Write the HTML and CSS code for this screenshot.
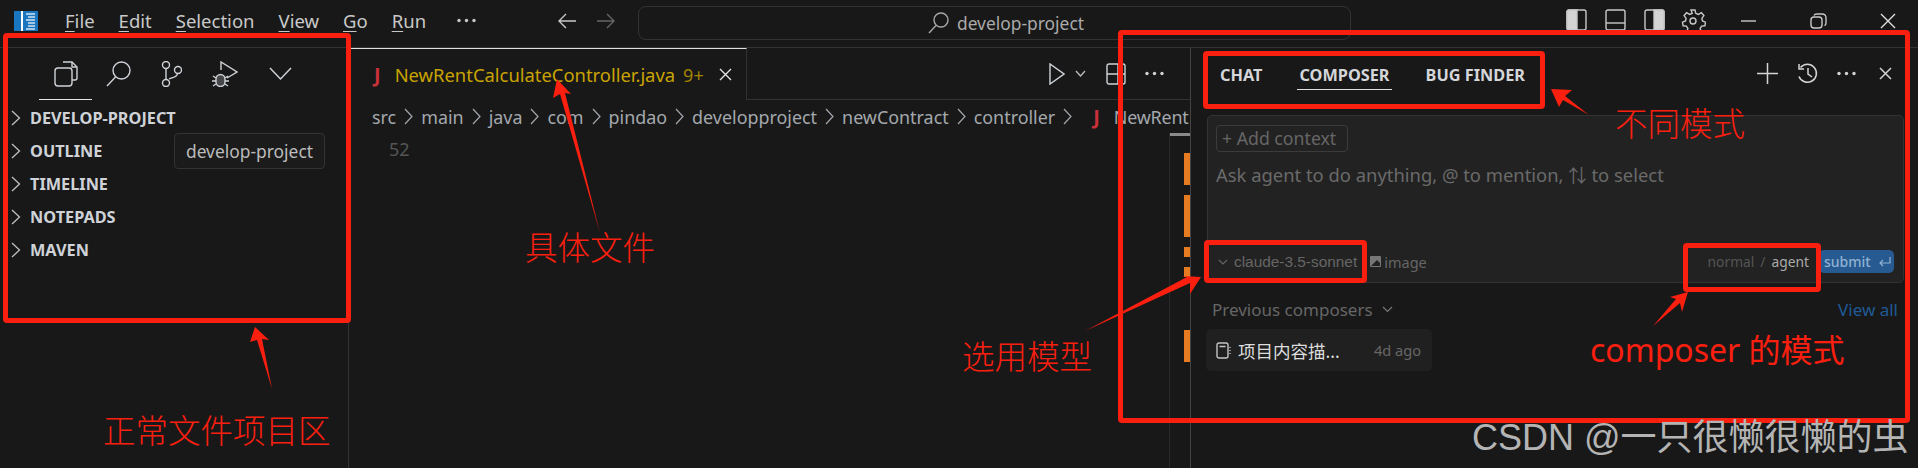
FILE: index.html
```html
<!DOCTYPE html>
<html lang="zh-CN">
<head>
  <meta charset="UTF-8">
  <title>Cursor composer</title>
  <link rel="stylesheet" href="styles.css">
</head>
<body>
  <div class="window">
    <header class="titlebar">
      <svg class="logo" width="24" height="20" viewBox="0 0 24 20">
        <rect width="24" height="20" fill="#1a77bf"/>
        <rect x="7" width="2" height="20" fill="#fff"/>
        <path d="M12 3h9M14 6h7M12 9h9M14 12h7M14 15h7M12 18h9" stroke="#cfe3f3" stroke-width="1.4"/>
      </svg>
      <nav class="menu">
        <span><u>F</u>ile</span>
        <span><u>E</u>dit</span>
        <span><u>S</u>election</span>
        <span><u>V</u>iew</span>
        <span><u>G</u>o</span>
        <span><u>R</u>un</span>
        <svg class="menu-more" width="19" height="5" viewBox="0 0 19 5" fill="#c8c8c8"><circle cx="2" cy="2.500" r="1.700"/><circle cx="9.500" cy="2.500" r="1.700"/><circle cx="17" cy="2.500" r="1.700"/></svg>
      </nav>
      <div class="nav-arrows">
        <svg width="20" height="18" viewBox="0 0 20 18" fill="none" stroke="#c8c8c8" stroke-width="1.4"><path d="M19 9H2M9 2 2 9l7 7"/></svg>
        <svg width="20" height="18" viewBox="0 0 20 18" fill="none" stroke="#666" stroke-width="1.4"><path d="M1 9h17M11 2l7 7-7 7"/></svg>
      </div>
      <div class="search">
        <svg width="21" height="22" viewBox="0 0 21 22" fill="none" stroke="#a8a8a8" stroke-width="1.4"><circle cx="13" cy="8" r="7"/><path d="M8 13.500 1 21"/></svg>
        <span>develop-project</span>
      </div>
      <div class="layout-icons">
        <svg width="21" height="22" viewBox="0 0 21 22" fill="none" stroke="#c8c8c8" stroke-width="1.4"><rect x="1" y="1" width="19" height="20" rx="2"/><path d="M1 3a2 2 0 0 1 2-2h8v20H3a2 2 0 0 1-2-2z" fill="#d4d4d4"/></svg>
        <svg width="21" height="22" viewBox="0 0 21 22" fill="none" stroke="#c8c8c8" stroke-width="1.4"><rect x="1" y="1" width="19" height="20" rx="2"/><path d="M1 14h19"/></svg>
        <svg width="21" height="22" viewBox="0 0 21 22" fill="none" stroke="#c8c8c8" stroke-width="1.4"><rect x="1" y="1" width="19" height="20" rx="2"/><path d="M10 1h8a2 2 0 0 1 2 2v16a2 2 0 0 1-2 2h-8z" fill="#d4d4d4"/></svg>
        <svg class="gear" width="26" height="24" viewBox="0 0 26 24" fill="none" stroke="#c8c8c8" stroke-width="1.4"><circle cx="13" cy="12" r="3"/><path d="M11 1h4l.8 3.300 2.600 1.100 3-1.700 2.500 2.900-2 2.700.6 2.700 3 1.200-.6 3.600-3.200.3-1.600 2.300 1 3.100-3.400 1.600-2-2.500h-3.400l-2 2.500-3.400-1.600 1-3.100-1.600-2.300-3.200-.3-.6-3.600 3-1.200.6-2.700-2-2.700 2.500-2.900 3 1.700 2.600-1.100z"/></svg>
      </div>
      <div class="win-controls">
        <svg width="16" height="16" viewBox="0 0 16 16" stroke="#c8c8c8" stroke-width="1.400"><path d="M0 8h15"/></svg>
        <svg width="17" height="16" viewBox="0 0 17 16" fill="none" stroke="#c8c8c8" stroke-width="1.400"><rect x="1" y="4" width="11" height="11" rx="3"/><path d="M4 2.500Q4.500 1 7 1h5q4 0 4 4v5q0 2-1.500 2.500"/></svg>
        <svg width="16" height="16" viewBox="0 0 16 16" stroke="#e0e0e0" stroke-width="1.400"><path d="m1 1 14 14M15 1 1 15"/></svg>
      </div>
    </header>

    <div class="workbench">
      <aside class="sidebar">
        <div class="activity">
          <span class="activity-item is-active">
            <svg width="24" height="26" viewBox="0 0 24 26" fill="none" stroke="#cfd3d8" stroke-width="1.400"><path d="M9 1h9l5 5v11a2 2 0 0 1-2 2h-3"/><path d="M18 1v5h5"/><rect x="1" y="7" width="17" height="18" rx="3"/></svg>
          </span>
          <span class="activity-item">
            <svg width="25" height="26" viewBox="0 0 25 26" fill="none" stroke="#cfd3d8" stroke-width="1.400"><circle cx="15.500" cy="9.500" r="8.500"/><path d="M9.500 16 1 25"/></svg>
          </span>
          <span class="activity-item">
            <svg width="21" height="26" viewBox="0 0 21 26" fill="none" stroke="#cfd3d8" stroke-width="1.400"><circle cx="5" cy="4" r="3.500"/><circle cx="5" cy="22" r="3.500"/><circle cx="17" cy="9" r="3.500"/><path d="M5 7.500v11M8 18c3-2 8-1 8.500-5.500"/></svg>
          </span>
          <span class="activity-item">
            <svg width="26" height="26" viewBox="0 0 26 26" fill="none" stroke="#cfd3d8" stroke-width="1.400"><path d="M9 9V1l16 10-10 6"/><path d="M4 18a4.500 4.500 0 0 1 9 0v3a4.500 4.500 0 0 1-9 0z" fill="#cfd3d8" fill-opacity=".25"/><path d="M1 15l3 2M16 15l-3 2M0 20h4M13 20h4M1 25l3-2M16 25l-3-2"/></svg>
          </span>
          <span class="activity-item">
            <svg width="23" height="14" viewBox="0 0 23 14" fill="none" stroke="#cfd3d8" stroke-width="1.500"><path d="m1 1 10.500 11L22 1"/></svg>
          </span>
        </div>
        <ul class="views">
          <li><svg width="10" height="16" viewBox="0 0 10 16" fill="none" stroke="#c0c0c0" stroke-width="1.300"><path d="m1 1 7.500 7L1 15"/></svg>DEVELOP-PROJECT</li>
          <li><svg width="10" height="16" viewBox="0 0 10 16" fill="none" stroke="#c0c0c0" stroke-width="1.300"><path d="m1 1 7.500 7L1 15"/></svg>OUTLINE</li>
          <li><svg width="10" height="16" viewBox="0 0 10 16" fill="none" stroke="#c0c0c0" stroke-width="1.300"><path d="m1 1 7.500 7L1 15"/></svg>TIMELINE</li>
          <li><svg width="10" height="16" viewBox="0 0 10 16" fill="none" stroke="#c0c0c0" stroke-width="1.300"><path d="m1 1 7.500 7L1 15"/></svg>NOTEPADS</li>
          <li><svg width="10" height="16" viewBox="0 0 10 16" fill="none" stroke="#c0c0c0" stroke-width="1.300"><path d="m1 1 7.500 7L1 15"/></svg>MAVEN</li>
        </ul>
        <div class="tooltip">develop-project</div>
      </aside>

      <main class="editor">
        <div class="tabbar">
          <div class="tab">
            <span class="java-j">J</span>
            <span class="tab-name">NewRentCalculateController.java</span>
            <span class="tab-count">9+</span>
            <svg width="13" height="13" viewBox="0 0 13 13" stroke="#e4e4e4" stroke-width="1.400"><path d="m1 1 11 11M12 1 1 12"/></svg>
          </div>
          <div class="tab-actions">
            <svg width="16" height="22" viewBox="0 0 16 22" fill="none" stroke="#cfd3d8" stroke-width="1.400"><path d="M1 1v20l14-10z"/></svg>
            <svg class="tab-caret" width="11" height="7" viewBox="0 0 11 7" fill="none" stroke="#c0c0c0" stroke-width="1.200"><path d="m1 1 4.500 5L10 1"/></svg>
            <svg class="tab-split" width="20" height="22" viewBox="0 0 20 22" fill="none" stroke="#cfd3d8" stroke-width="1.400"><rect x="1" y="1" width="18" height="20" rx="2"/><path d="M1 11h18M12 1v20"/></svg>
            <svg class="tab-dots" width="19" height="5" viewBox="0 0 19 5" fill="#d4d4d4"><circle cx="2" cy="2.500" r="1.700"/><circle cx="9.500" cy="2.500" r="1.700"/><circle cx="17" cy="2.500" r="1.700"/></svg>
          </div>
        </div>
        <div class="crumbs">
          <span>src</span>
          <svg width="9" height="17" viewBox="0 0 9 17" fill="none" stroke="#a4a8ad" stroke-width="1.200"><path d="m1 1 7 7.500L1 16"/></svg>
          <span>main</span>
          <svg width="9" height="17" viewBox="0 0 9 17" fill="none" stroke="#a4a8ad" stroke-width="1.200"><path d="m1 1 7 7.500L1 16"/></svg>
          <span>java</span>
          <svg width="9" height="17" viewBox="0 0 9 17" fill="none" stroke="#a4a8ad" stroke-width="1.200"><path d="m1 1 7 7.500L1 16"/></svg>
          <span>com</span>
          <svg width="9" height="17" viewBox="0 0 9 17" fill="none" stroke="#a4a8ad" stroke-width="1.200"><path d="m1 1 7 7.500L1 16"/></svg>
          <span>pindao</span>
          <svg width="9" height="17" viewBox="0 0 9 17" fill="none" stroke="#a4a8ad" stroke-width="1.200"><path d="m1 1 7 7.500L1 16"/></svg>
          <span>developproject</span>
          <svg width="9" height="17" viewBox="0 0 9 17" fill="none" stroke="#a4a8ad" stroke-width="1.200"><path d="m1 1 7 7.500L1 16"/></svg>
          <span>newContract</span>
          <svg width="9" height="17" viewBox="0 0 9 17" fill="none" stroke="#a4a8ad" stroke-width="1.200"><path d="m1 1 7 7.500L1 16"/></svg>
          <span>controller</span>
          <svg width="9" height="17" viewBox="0 0 9 17" fill="none" stroke="#a4a8ad" stroke-width="1.200"><path d="m1 1 7 7.500L1 16"/></svg>
          <span class="java-j crumb-j">J</span>
          <span class="crumb-last">NewRent</span>
        </div>
        <div class="code">
          <div class="line-no">52</div>
          <div class="ruler">
            <div class="slider"></div>
            <div class="mark mark-a"></div>
            <div class="mark mark-b"></div>
            <div class="mark mark-c"></div>
            <div class="mark mark-d"></div>
            <div class="mark mark-e"></div>
          </div>
        </div>
      </main>

      <section class="panel">
        <div class="panel-head">
          <div class="modes">
            <span class="mode mode-chat">CHAT</span>
            <span class="mode mode-composer">COMPOSER</span>
            <span class="mode mode-bug">BUG FINDER</span>
          </div>
          <div class="panel-actions">
            <svg width="21" height="21" viewBox="0 0 21 21" stroke="#d4d4d4" stroke-width="1.500"><path d="M10.500 0v21M0 10.500h21"/></svg>
            <svg width="21" height="21" viewBox="0 0 21 21" fill="none" stroke="#d4d4d4" stroke-width="1.500"><path d="M3.500 4.500a9 9 0 1 1-1.500 9M2 1v5h5M11 5v6l4 3"/></svg>
            <svg width="19" height="5" viewBox="0 0 19 5" fill="#d4d4d4"><circle cx="2" cy="2.500" r="1.700"/><circle cx="9.500" cy="2.500" r="1.700"/><circle cx="17" cy="2.500" r="1.700"/></svg>
            <svg class="panel-close" width="13" height="13" viewBox="0 0 13 13" stroke="#d4d4d4" stroke-width="1.500"><path d="m1 1 11 11M12 1 1 12"/></svg>
          </div>
        </div>

        <div class="composer">
          <div class="add-context">+ Add context</div>
          <div class="prompt">Ask agent to do anything, @ to mention, ⇅ to select</div>
          <div class="composer-foot">
            <svg width="10" height="6" viewBox="0 0 10 6" fill="none" stroke="#666" stroke-width="1.100"><path d="m1 1 4 4 4-4"/></svg>
            <span class="model">claude-3.5-sonnet</span>
            <svg class="image-icon" width="11" height="11" viewBox="0 0 11 11"><rect width="11" height="11" rx="1" fill="#777"/><path d="M1 10 7 4l3 3v3z" fill="#222"/></svg>
            <span class="image-label">image</span>
            <span class="switch"><span class="off">normal</span><span class="slash">/</span><span class="on">agent</span></span>
            <span class="submit">submit
              <svg width="14" height="12" viewBox="0 0 14 12" fill="none" stroke="#8fb2d2" stroke-width="1.200"><path d="M12 1v6H2M5 4 2 7l3 3"/></svg>
            </span>
          </div>
        </div>

        <div class="previous">
          <span>Previous composers</span>
          <svg width="11" height="7" viewBox="0 0 11 7" fill="none" stroke="#777" stroke-width="1.200"><path d="m1 1 4.500 4.500L10 1"/></svg>
          <a class="view-all">View all</a>
        </div>
        <div class="history-row">
          <svg width="15" height="17" viewBox="0 0 15 17" fill="none" stroke="#c4c4c4" stroke-width="1.400"><rect x="1" y="1" width="11" height="15" rx="2"/><path d="M3.500 4.500h6M14 5v1M14 8v1M14 11v1"/></svg>
          <span class="history-title">项目内容描...</span>
          <span class="history-age">4d ago</span>
        </div>
      </section>
    </div>
  </div>

  <!-- red notes drawn over the screenshot -->
  <div class="note-box box-side"></div>
  <div class="note-box box-panel"></div>
  <div class="note-box box-modes"></div>
  <div class="note-box box-model"></div>
  <div class="note-box box-switch"></div>
  <svg class="arrows" width="1918" height="468" viewBox="0 0 1918 468" fill="#fb1f10">
    <path d="M557 79 571 94 565 93 600 233 560 94 553 98z"/>
    <path d="M255 327 269 340 262 339 272 389 257 340 250 342z"/>
    <path d="M1201 277 1190 294 1190 283 1085 331 1187 277 1182 276z"/>
    <path d="M1551 89 1572 90 1565 96 1589 115 1563 100 1559 107z"/>
    <path d="M1688 292 1682 312 1680 303 1653 326 1676 299 1670 297z"/>
  </svg>
  <div class="note note-side">正常文件项目区</div>
  <div class="note note-file">具体文件</div>
  <div class="note note-model">选用模型</div>
  <div class="note note-modes">不同模式</div>
  <div class="note note-switch">composer 的模式</div>
  <div class="watermark">CSDN @一只很懒很懒的虫</div>
</body>
</html>
```

FILE: styles.css
```css
* {
  box-sizing: border-box;
}

body {
  margin: 0;
  background: #181818;
  color: #ccc;
  font-family: "Noto Sans", "Noto Sans CJK SC", sans-serif;
  font-size: 17px;
  overflow: hidden;
}

svg {
  display: block;
  flex: none;
}

.window {
  height: 468px;
  display: flex;
  flex-direction: column;
}

/* title bar */
.titlebar {
  height: 48px;
  flex: none;
  display: flex;
  align-items: center;
  border-bottom: 1px solid #333;
  padding-left: 14px;
  padding-bottom: 6px;
}

.menu {
  display: flex;
  align-items: center;
  gap: 24px;
  width: 459px;
  margin-left: 27px;
  color: #c8c8c8;
  font-size: 18.500px;
}

.menu u {
  text-underline-offset: 3px;
}

.menu-more {
  margin-left: 7px;
}

.nav-arrows {
  display: flex;
  gap: 19px;
  margin-left: 33px;
}

.search {
  width: 713px;
  height: 34px;
  margin-left: 22px;
  margin-top: 4px;
  padding-left: 23px;
  display: flex;
  align-items: center;
  justify-content: center;
  gap: 8px;
  border: 1px solid #333;
  border-radius: 8px;
  color: #aaa;
  font-size: 17.400px;
}

.layout-icons {
  display: flex;
  gap: 18px;
  margin-left: 215px;
}

.gear {
  margin-left: -3px;
}

.win-controls {
  display: flex;
  align-items: center;
  gap: 53px;
  margin-left: 35px;
}

/* columns */
.workbench {
  flex: 1;
  display: flex;
  min-height: 0;
}

.sidebar {
  width: 349px;
  flex: none;
  border-right: 1px solid #333;
  position: relative;
}

.activity {
  height: 52px;
  display: flex;
  padding-left: 39px;
  align-items: center;
}

.activity-item {
  width: 53px;
  height: 52px;
  display: flex;
  align-items: center;
  justify-content: center;
}

.activity-item:last-child {
  margin-left: 3px;
}

.activity-item.is-active {
  border-bottom: 1px solid #e6e6e6;
}

.views {
  list-style: none;
  margin: 0;
  padding: 1px 0 0;
}

.views li {
  height: 33px;
  display: flex;
  align-items: center;
  gap: 9px;
  padding-left: 11px;
  font-size: 16.300px;
  font-weight: 700;
  color: #cfd3d8;
}

.tooltip {
  position: absolute;
  left: 174px;
  top: 85px;
  width: 151px;
  height: 36px;
  line-height: 34px;
  text-align: center;
  background: #1b1b1b;
  border: 1px solid #333;
  border-radius: 4px;
  color: #bbb;
  font-size: 17.400px;
}

/* editor */
.editor {
  width: 841px;
  flex: none;
  display: flex;
  flex-direction: column;
}

.tabbar {
  height: 52px;
  flex: none;
  display: flex;
  border-bottom: 1px solid #333;
}

.tab {
  width: 398px;
  height: 52px;
  display: flex;
  align-items: center;
  padding-left: 25px;
  border-top: 1px solid #e0e0e0;
  border-right: 1px solid #333;
  background: #181818;
}

.java-j {
  color: #c8303a;
  font-weight: 700;
  font-size: 20px;
}

.tab-name {
  margin-left: 14px;
  color: #c9a400;
  font-size: 18.400px;
  white-space: nowrap;
}

.tab-count {
  margin-left: 8px;
  margin-right: 15px;
  color: #a38400;
  font-size: 18px;
}

.tab-actions {
  display: flex;
  align-items: center;
  margin-left: 302px;
}

.tab-caret {
  margin-left: 10px;
}

.tab-split {
  margin-left: 20px;
}

.tab-dots {
  margin-left: 19px;
}

.crumbs {
  height: 33px;
  flex: none;
  display: flex;
  align-items: center;
  gap: 8px;
  padding-left: 23px;
  color: #a4a8ad;
  font-size: 17.900px;
  white-space: nowrap;
}

.crumb-j {
  margin: 0 6px 0 13px;
  font-size: 20px;
}

.crumb-last {
  letter-spacing: -0.2px;
}

.code {
  flex: 1;
  display: flex;
}

.line-no {
  margin-left: 40px;
  color: #555;
  font-size: 18px;
  line-height: 32px;
}

.ruler {
  width: 21px;
  margin-left: auto;
  border-left: 1px solid #2a2a2a;
}

.slider {
  height: 3px;
  background: #8a8a8a;
}

.mark {
  width: 6px;
  margin-left: 14px;
  background: #e77b22;
}

.mark-a {
  height: 32px;
  margin-top: 17px;
}

.mark-b {
  height: 42px;
  margin-top: 10px;
}

.mark-c {
  height: 10px;
  margin-top: 10px;
}

.mark-d {
  height: 10px;
  margin-top: 10px;
}

.mark-e {
  height: 32px;
  margin-top: 53px;
}

/* composer panel */
.panel {
  flex: 1;
  min-width: 0;
  border-left: 1px solid #444;
}

.panel-head {
  height: 67px;
  display: flex;
  padding-left: 29px;
}

.modes {
  display: flex;
  height: 43px;
  font-weight: 700;
  font-size: 16.300px;
  color: #d4d6da;
}

.mode {
  height: 42px;
  line-height: 54px;
}

.mode-composer {
  margin-left: 35px;
  padding: 0 2px;
  border-bottom: 1px solid #e0e0e0;
}

.mode-bug {
  margin-left: 34px;
}

.panel-actions {
  display: flex;
  align-items: center;
  height: 50px;
  margin-left: auto;
  padding-right: 26px;
  gap: 19px;
}

.panel-close {
  margin-left: 4px;
}

.composer {
  height: 168px;
  margin: 0 14px 0 16px;
  background: #222;
  border: 1px solid #333;
  border-radius: 5px;
  padding: 9px 8px 0;
  display: flex;
  flex-direction: column;
}

.add-context {
  width: 132px;
  height: 27px;
  line-height: 24px;
  padding-left: 5px;
  border: 1px solid #3c3c3c;
  border-radius: 4px;
  color: #666;
  font-size: 17.700px;
  white-space: nowrap;
}

.prompt {
  margin-top: 11px;
  color: #6a6a6a;
  font-size: 18.400px;
  line-height: 24px;
}

.composer-foot {
  margin-top: auto;
  height: 41px;
  display: flex;
  align-items: center;
  padding-left: 2px;
  color: #666;
  font-size: 13px;
}

.model {
  margin-left: 6px;
  font-family: "Liberation Sans", sans-serif;
  font-size: 15.400px;
}

.image-icon {
  margin-left: 13px;
}

.image-label {
  margin-left: 3px;
  font-size: 14.500px;
}

.switch {
  display: flex;
  margin-left: auto;
  margin-right: 10px;
  font-size: 13.800px;
}

.switch .off {
  color: #555;
}

.switch .slash {
  margin: 0 6px;
  color: #555;
}

.switch .on {
  color: #aaa;
}

.submit {
  width: 75px;
  height: 23px;
  margin-right: 1px;
  display: flex;
  align-items: center;
  gap: 7px;
  padding-left: 5px;
  background: #265a90;
  border-radius: 5px;
  color: #8fb2d2;
  font-size: 14px;
  font-weight: 500;
}

.previous {
  height: 46px;
  display: flex;
  align-items: center;
  padding: 6px 20px 0 21px;
  color: #666;
  font-size: 17px;
}

.previous svg {
  margin-left: 9px;
}

.view-all {
  margin-left: auto;
  color: #1f5a96;
}

.history-row {
  width: 226px;
  height: 42px;
  margin-left: 15px;
  display: flex;
  align-items: center;
  padding: 0 11px 0 10px;
  background: #202020;
  border-radius: 5px;
  font-size: 17.500px;
  color: #ddd;
}

.history-title {
  margin-left: 7px;
  white-space: nowrap;
}

.history-age {
  margin-left: auto;
  color: #666;
  font-size: 14.600px;
  white-space: nowrap;
}

/* red notes over the shot */
.note-box {
  position: absolute;
  border: 5px solid #fb1f10;
  border-radius: 4px;
}

.box-side {
  left: 3px;
  top: 33px;
  width: 348px;
  height: 290px;
}

.box-panel {
  left: 1118px;
  top: 30px;
  width: 792px;
  height: 393px;
}

.box-modes {
  left: 1203px;
  top: 51px;
  width: 342px;
  height: 58px;
}

.box-model {
  left: 1204px;
  top: 240px;
  width: 163px;
  height: 43px;
}

.box-switch {
  left: 1683px;
  top: 243px;
  width: 138px;
  height: 49px;
}

.arrows {
  position: absolute;
  left: 0;
  top: 0;
  pointer-events: none;
}

.note {
  position: absolute;
  color: #fb1f10;
  font-family: "Noto Sans CJK SC", sans-serif;
  font-size: 32.500px;
  font-weight: 300;
  line-height: 40px;
  white-space: nowrap;
}

.note-side {
  left: 103px;
  top: 409px;
}

.note-file {
  left: 525px;
  top: 226px;
}

.note-model {
  left: 962px;
  top: 335px;
}

.note-modes {
  left: 1615px;
  top: 102px;
}

.note-switch {
  left: 1590px;
  top: 330px;
  font-family: "Noto Sans", "Noto Sans CJK SC", sans-serif;
  font-size: 32px;
  font-weight: 400;
}

.watermark {
  position: absolute;
  left: 1472px;
  top: 415px;
  color: #b4b4b4;
  font-family: "Liberation Sans", "Noto Sans CJK SC", sans-serif;
  font-size: 36px;
  line-height: 46px;
  white-space: nowrap;
}
```
